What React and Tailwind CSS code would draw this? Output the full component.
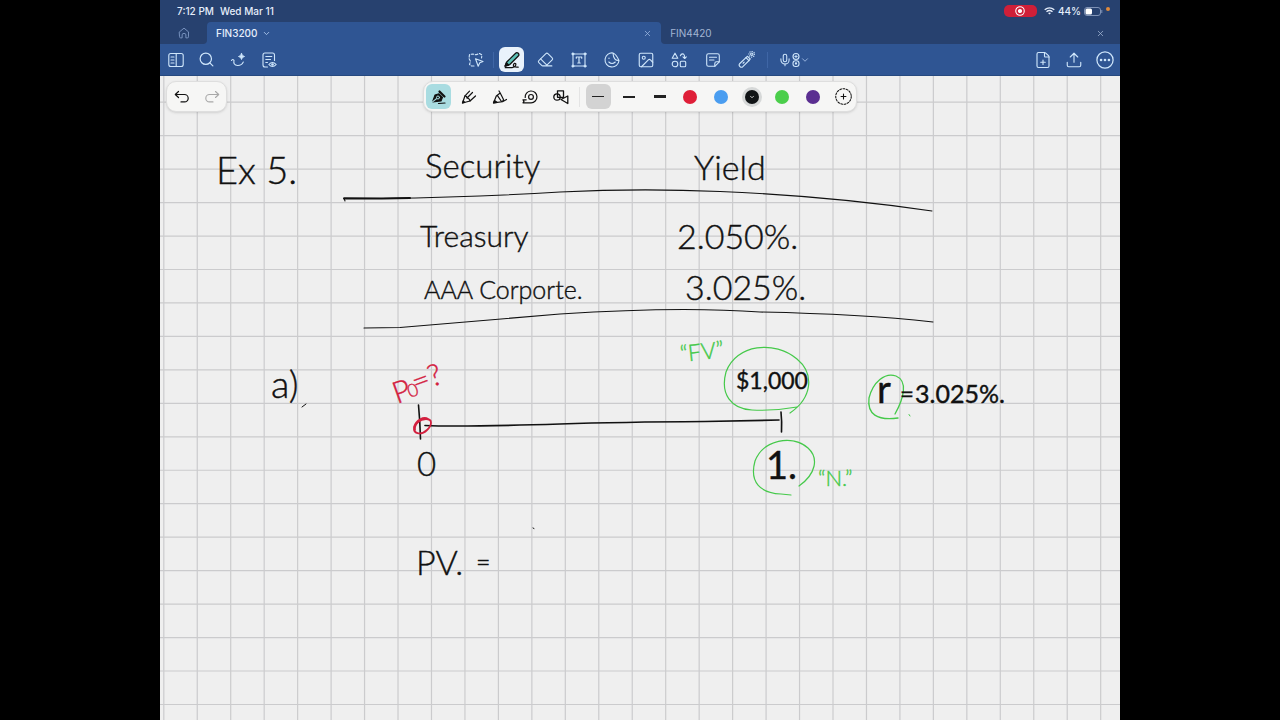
import { ChevronDown, Eraser, FilePlus, Image, Mic, Search, Upload, X } from 'lucide-react'

const INK = '#111111'
const RED = '#d3203f'
const GREEN = '#45c94a'

const GRID = 33.46
const columns = Array.from({ length: 60 }, (_, i) => 3.8 + i * GRID)
const rows = Array.from({ length: 50 }, (_, i) => 26.2 + i * GRID)

const notes = [
  { text: 'Ex 5.', x: 56, y: 108, size: 38 },
  { text: 'Security', x: 265, y: 102, size: 33 },
  { text: 'Yield', x: 534, y: 104, size: 34 },
  { text: 'Treasury', x: 260, y: 171, size: 30 },
  { text: 'AAA Corporte.', x: 264, y: 223, size: 25 },
  { text: '2.050%.', x: 517, y: 173, size: 34 },
  { text: '3.025%.', x: 525, y: 224, size: 34 },
  { text: 'a)', x: 111, y: 322, size: 38 },
  { text: '0', x: 257, y: 400, size: 33 },
  { text: '1.', x: 606, y: 403, size: 38, weight: 400 },
  { text: '$1,000', x: 576, y: 313, size: 23, weight: 400 },
  { text: 'r', x: 717, y: 327, size: 38, weight: 400 },
  { text: '=', x: 740, y: 326, size: 24, weight: 400 },
  { text: '3.025%.', x: 755, y: 327, size: 25, weight: 400 },
  { text: 'PV.', x: 256, y: 499, size: 34 },
  { text: '=', x: 316, y: 495, size: 25 },
  { text: '“FV”', x: 521, y: 286, size: 23, color: GREEN, angle: -6 },
  { text: '“N.”', x: 658, y: 410, size: 22, color: GREEN },
  { text: 'P', x: 237, y: 328, size: 30, color: RED, angle: -20 },
  { text: '0', x: 250, y: 322, size: 18, color: RED, angle: -20 },
  { text: '=?', x: 256, y: 317, size: 30, color: RED, angle: -20 },
]

const strokes = [
  { d: 'M185 125 L184 122 L222 122.5 Q320 121 400 116 Q480 112 560 115.5 Q670 120 772 135', width: 1.1 },
  { d: 'M184 122.5 L222 122.6 L250 122', width: 2 },
  { d: 'M204 252 L240 251.5 Q330 244 400 238 Q520 230 600 236 Q700 238 773 246', width: 1.1 },
  { d: 'M258.500 329 Q260 345 260.500 363', width: 1.6 },
  { d: 'M265 349.500 Q300 351 400 348 Q460 346 545 345.500 L619 344', width: 1.7 },
  { d: 'M621 336 Q622 345 621.500 356', width: 1.6 },
  { d: 'M373 452 L374 452.500', width: 1 },
  { d: 'M142 331 L146 328', width: 1 },
  { d: 'M268 343 C264 340 256 344 254 351 C253 359 262 359 267 354 C272 349 273 343 266 343 C260 343 254 348 255 354', width: 1.8, color: RED },
  { d: 'M630 337 C652 322 655 298 637 283 C615 264 576 268 566 296 C560 318 571 333 592 334 C610 335 626 333 637 331', width: 1.2, color: GREEN },
  { d: 'M639 410 C656 398 659 382 648 372 C632 358 603 364 595 385 C589 407 601 417 621 418 L631 419', width: 1.2, color: GREEN },
  { d: 'M735 338 C744 322 748 305 736 300 C725 296 713 306 709 322 C707 338 717 345 738 342', width: 1.3, color: GREEN },
  { d: 'M749 338.500 l1 1.500', width: 1, color: GREEN },
]

function Icon({ size = 16, width = 1.1, children }) {
  return (
    <svg width={size} height={size} viewBox="0 0 16 16" fill="none" stroke="currentColor" strokeWidth={width} strokeLinecap="round" strokeLinejoin="round" aria-hidden="true">
      {children}
    </svg>
  )
}

const HomeIcon = () => (
  <Icon size={12} width={1.2}>
    <path d="M2 6.500 L8 1.500 L14 6.500 V13 Q14 14.500 12.500 14.500 H10.500 V10.500 Q10.500 8.500 8 8.500 Q5.500 8.500 5.500 10.500 V14.500 H3.500 Q2 14.500 2 13 Z" />
  </Icon>
)

const PanelIcon = () => (
  <Icon>
    <rect x="0.8" y="1.500" width="14.400" height="13" rx="2" />
    <path d="M8.200 1.500 V14.500 M3 5 H6 M3 8 H6 M3 11 H6" />
  </Icon>
)

const AssistIcon = () => (
  <Icon>
    <path d="M1.500 8.500 Q2.500 6.500 4 8.300 Q3 13 7.500 13.500 Q11.500 13.700 13.300 10" />
    <path d="M11.500 1.500 Q11.800 4 14.500 4.500 Q11.800 5 11.500 7.500 Q11.200 5 8.500 4.500 Q11.200 4 11.500 1.500 Z" fill="currentColor" strokeWidth="0.900" />
  </Icon>
)

const OutlineIcon = () => (
  <Icon>
    <path d="M6.500 15 H4 Q2 15 2 13 V3 Q2 1 4 1 H11.500 Q13.500 1 13.500 3 V8.500" />
    <path d="M4.800 4.500 H10.800 M4.800 7.500 H9.500 M4.800 10.500 H6.500" />
    <path d="M7.800 12.500 Q11.500 8.500 15.200 12.500 Q11.500 16.500 7.800 12.500 Z" />
    <circle cx="11.500" cy="12.500" r="0.800" fill="currentColor" />
  </Icon>
)

const LassoIcon = () => (
  <Icon>
    <path d="M6 14 H3.500 L1.500 12.500 L2.500 9.500 L1 6.500 L1.500 2.500 L5 2 L8 2.800 L11.500 1.500 L14 3 L13.500 6" strokeDasharray="2.600 1.700" />
    <path d="M7.500 6.800 L15 9.500 L11.800 10.800 L10.200 14.200 Z" />
  </Icon>
)

const PenIcon = () => (
  <Icon size={18}>
    <path d="M1.800 13.500 L3.300 9.800 L11.200 2 Q12.300 0.900 13.600 2 Q14.700 3.300 13.600 4.500 L5.800 12.200 Z" fill="#5cc2b8" stroke={INK} />
    <path d="M1.800 13.500 L3 10.500 L5 12.500 Z" fill={INK} stroke={INK} />
    <path d="M2 14.800 H8 Q12 13.800 11.300 11.300 Q10.300 10.300 9.300 12.200 Q8.800 14.700 13.500 14.300" stroke={INK} />
  </Icon>
)

const TextIcon = () => (
  <Icon>
    <path d="M3 2 H13 M3 14 H13 M2 3 V13 M14 3 V13" />
    <path d="M5.300 6.200 V5 H10.700 V6.200 M8 5 V11 M6.800 11 H9.200" strokeWidth="1.200" />
    <g fill="currentColor" strokeWidth="0.500">
      <circle cx="1.900" cy="1.900" r="1.200" />
      <circle cx="14.100" cy="1.900" r="1.200" />
      <circle cx="1.900" cy="14.100" r="1.200" />
      <circle cx="14.100" cy="14.100" r="1.200" />
    </g>
  </Icon>
)

const StickerIcon = () => (
  <Icon>
    <path d="M9 1 A7 7 0 1 0 15 8.500 Q9.500 9 9 1 Q12 2 15 8.500" />
    <path d="M5 6 V6.500 M4.800 10 Q8 13 11.300 10" />
  </Icon>
)

const ShapesIcon = () => (
  <Icon>
    <path d="M4 1.200 L6.800 6.300 H1.200 Z" />
    <path d="M9.300 3.800 Q10 1.500 12.300 1.900 Q13.800 2.500 13.700 6 M12 4.800 L13.700 6.500 L15.300 4.800" />
    <circle cx="4" cy="12" r="2.800" />
    <rect x="9.300" y="9.300" width="5.400" height="5.400" rx="1" />
  </Icon>
)

const NoteIcon = () => (
  <Icon>
    <path d="M9.800 14.300 H3.500 Q1.700 14.300 1.700 12.500 V3.500 Q1.700 1.700 3.500 1.700 H12.500 Q14.300 1.700 14.300 3.500 V9.800 Z" />
    <path d="M14.300 9.800 H11.500 Q9.800 9.800 9.800 11.500 V14.300 M4.500 5.200 H11.500 M4.500 8 H9" />
  </Icon>
)

const LaserIcon = () => (
  <Icon size={17}>
    <path d="M1.500 12 L7.500 6.200 L10.300 9 L4.300 15 Q3 15.700 1.800 14.600 Q0.500 13.300 1.500 12 Z" />
    <path d="M7.500 6.200 L9 5 L11.500 7.500 L10.300 9 M4.800 11.500 L5.800 10.500" />
    <circle cx="13" cy="3" r="1.100" />
    <circle cx="13" cy="3" r="2.700" strokeDasharray="0.200 1.900" />
  </Icon>
)

// two stacked badges beside the microphone
const BadgesIcon = () => (
  <svg width="8" height="16" viewBox="0 0 8 16" fill="none" stroke="currentColor" strokeWidth="1.100" strokeLinecap="round" strokeLinejoin="round" aria-hidden="true">
    <circle cx="4" cy="4.500" r="3" />
    <path d="M2.800 4.500 H5.200 M4 3.300 V5.700" strokeWidth="0.900" />
    <rect x="1" y="8.800" width="6" height="5.700" rx="2.500" />
    <circle cx="4" cy="11.500" r="0.600" fill="currentColor" />
  </svg>
)

const MoreIcon = () => (
  <Icon size={18}>
    <circle cx="8" cy="8" r="7.200" />
    <g fill="currentColor" stroke="none">
      <circle cx="4.500" cy="8" r="1.150" />
      <circle cx="8" cy="8" r="1.150" />
      <circle cx="11.500" cy="8" r="1.150" />
    </g>
  </Icon>
)

const FountainIcon = () => (
  <Icon>
    <path d="M1.500 13 L4 6 L8 4.800 L11.500 8.300 L10 12 Z" fill={INK} />
    <path d="M8.500 2.500 L13.500 7.500" strokeWidth="2.200" />
    <path d="M1.200 13.200 L6.300 9" stroke="#a9dce1" />
    <circle cx="7" cy="8.500" r="1.500" fill={INK} stroke="#a9dce1" strokeWidth="1" />
    <path d="M7.500 14.500 L14 14" strokeWidth="1.200" />
  </Icon>
)

const BallpointIcon = () => (
  <Icon width={1.2}>
    <path d="M8.500 2.200 L4 6.800 L1.500 14 L9 12 L14.500 7" />
    <path d="M4 6.800 Q6 7 6 9 Q8.500 9.300 9 12 M11.500 3.500 L6 9" />
    <path d="M1.500 14 L2.300 11.800 L3.800 13.400 Z" fill="currentColor" />
  </Icon>
)

const BrushIcon = () => (
  <Icon width={1.2}>
    <path d="M7 2 L8.200 4 L4.300 7 L1.500 14 L10.500 12.700 L14.500 10.500 M8.200 4 L11.500 10.500 L10.500 12.700 M5.300 6.300 L9.500 12.500" />
    <path d="M1.500 14 L2.500 11.500 L5 13.300 Z" fill="currentColor" />
  </Icon>
)

const TapeIcon = () => (
  <Icon width={1.2}>
    <path d="M3.200 8.500 A5.900 5.900 0 1 1 9 13.800 H1 L2 12.300 L1 10.800 H4.200" />
    <circle cx="9" cy="7.900" r="2.400" />
  </Icon>
)

const ShapePenIcon = () => (
  <Icon width={1.3}>
    <rect x="4.500" y="1.800" width="6" height="6.500" />
    <circle cx="4" cy="8" r="3.200" />
    <path d="M8 10.500 L14.800 7 V14.500 Z" />
  </Icon>
)

const UndoIcon = () => (
  <Icon width={1.2}>
    <path d="M4.500 2.500 L1.300 5.500 L4.500 8.500 M1.500 5.500 H10.500 A3.700 3.700 0 0 1 10.500 12.900 H7" />
  </Icon>
)

const RedoIcon = () => (
  <Icon width={1.1}>
    <path d="M11.500 2.500 L14.700 5.500 L11.500 8.500 M14.500 5.500 H5.500 A3.700 3.700 0 0 0 5.500 12.900 H9" />
  </Icon>
)

const drawTools = [
  { label: 'Eraser', icon: <Eraser size={17} strokeWidth={1.5} /> },
  { label: 'Text', icon: <TextIcon /> },
  { label: 'Stickers', icon: <StickerIcon /> },
  { label: 'Image', icon: <Image size={18} strokeWidth={1.5} /> },
  { label: 'Elements', icon: <ShapesIcon /> },
  { label: 'Note', icon: <NoteIcon /> },
  { label: 'Laser pointer', icon: <LaserIcon /> },
]

const pens = [
  { label: 'Ball pen', icon: <BallpointIcon /> },
  { label: 'Brush pen', icon: <BrushIcon /> },
  { label: 'Tape', icon: <TapeIcon /> },
  { label: 'Shape pen', icon: <ShapePenIcon /> },
]

const widths = [
  { label: 'Thin', bar: 'h-px w-3', box: 'bg-[#d3d3d3]' },
  { label: 'Medium', bar: 'h-[2px] w-3', box: '' },
  { label: 'Thick', bar: 'h-[3px] w-3', box: '' },
]

const colors = [
  { label: 'Red', fill: 'bg-[#df1f38]' },
  { label: 'Blue', fill: 'bg-[#4a9df0]' },
  { label: 'Black', fill: 'bg-[#111416]', active: true },
  { label: 'Green', fill: 'bg-[#4bce4b]' },
  { label: 'Purple', fill: 'bg-[#5b2f91]' },
]

function ToolButton({ label, className = '', children }) {
  return (
    <button type="button" aria-label={label} className={`flex h-[25px] w-[25px] shrink-0 items-center justify-center rounded-md ${className}`}>
      {children}
    </button>
  )
}

function StatusBar() {
  return (
    <div className="flex h-[22px] items-center justify-between bg-[#27416f] pl-[17px] pr-[10px] text-[10px] font-medium text-[#e6eefb]">
      <div className="flex gap-[6px]">
        <span>7:12 PM</span>
        <span>Wed Mar 11</span>
      </div>
      <div className="flex items-center gap-[3px]">
        <span className="mr-1 flex h-3 w-[33px] items-center justify-center rounded-[5px] bg-[#cf1f38] text-white">
          <Icon size={10} width={1.7}>
            <circle cx="8" cy="8" r="6.800" />
            <circle cx="8" cy="8" r="2.500" fill="currentColor" />
          </Icon>
        </span>
        <svg width="11" height="8" viewBox="0 0 11 8" fill="none" stroke="currentColor" strokeWidth="1.400" aria-hidden="true">
          <path d="M0.700 2.700 Q5.500 -1 10.300 2.700 M2.500 4.700 Q5.500 2.300 8.500 4.700" />
          <path d="M4 6 Q5.500 5 7 6 L5.500 7.600 Z" fill="currentColor" stroke="none" />
        </svg>
        <span>44%</span>
        <svg width="19" height="9" viewBox="0 0 19 9" aria-hidden="true">
          <rect x="0.500" y="0.500" width="16" height="8" rx="2.500" fill="none" stroke="#7f92b5" />
          <rect x="1.500" y="1.500" width="6.500" height="6" rx="1.500" fill="#ffffff" />
          <path d="M17.800 3 V6" stroke="#7f92b5" />
        </svg>
        <span className="mb-1 h-1 w-1 rounded-full bg-[#e08a3c]" />
      </div>
    </div>
  )
}

function Tabs() {
  return (
    <nav className="flex h-[22px] bg-[#2f5593] text-[10px]">
      <button type="button" aria-label="Home" className="flex w-[47px] items-center justify-center rounded-br bg-[#27416f] text-[#7f9ac6]">
        <HomeIcon />
      </button>
      <div className="grid flex-1 grid-cols-[99fr_100fr]">
        <div className="bg-[#27416f]">
          <div className="flex h-full items-center rounded-t bg-[#2f5593] px-[9px]">
            <button type="button" className="flex items-center gap-1 font-medium text-[#e6eefb]">
              FIN3200
              <ChevronDown size={9} strokeWidth={2.5} className="text-[#a9c3ea]" />
            </button>
            <button type="button" aria-label="Close FIN3200" className="ml-auto text-[#9db8e2]">
              <X size={9} strokeWidth={2} />
            </button>
          </div>
        </div>
        <div className="flex items-center rounded-bl bg-[#27416f] pl-[9px] pr-[15px] text-[#a3b5d3]">
          <button type="button">FIN4420</button>
          <button type="button" aria-label="Close FIN4420" className="ml-auto">
            <X size={9} strokeWidth={2} />
          </button>
        </div>
      </div>
    </nav>
  )
}

function Toolbar() {
  return (
    <div className="flex h-8 items-center justify-between border-b border-[#26497f] bg-[#2f5593] px-[3px] text-[#cfe6fb]">
      <div className="flex flex-1 gap-[6px]">
        <ToolButton label="Sidebar"><PanelIcon /></ToolButton>
        <ToolButton label="Search"><Search size={17} strokeWidth={1.7} /></ToolButton>
        <ToolButton label="Assistant"><AssistIcon /></ToolButton>
        <ToolButton label="Outline"><OutlineIcon /></ToolButton>
      </div>
      <div className="flex items-center pr-[7px]">
        <ToolButton label="Lasso"><LassoIcon /></ToolButton>
        <span className="mx-[5px] h-4 w-px bg-[#3f66a6]" />
        <div className="flex w-[260px] justify-between">
          <ToolButton label="Pen" className="bg-[#e9f2fb]"><PenIcon /></ToolButton>
          {drawTools.map((tool) => (
            <ToolButton key={tool.label} label={tool.label}>{tool.icon}</ToolButton>
          ))}
        </div>
        <span className="mx-2 h-4 w-px bg-[#3f66a6]" />
        <button type="button" aria-label="Record audio" className="flex items-center pl-[2px]">
          <Mic size={14} strokeWidth={1.8} />
          <BadgesIcon />
          <ChevronDown size={10} strokeWidth={2} className="text-[#a9c3ea]" />
        </button>
      </div>
      <div className="flex flex-1 justify-end gap-[6px]">
        <ToolButton label="Add page"><FilePlus size={18} strokeWidth={1.5} /></ToolButton>
        <ToolButton label="Share"><Upload size={18} strokeWidth={1.5} /></ToolButton>
        <ToolButton label="More"><MoreIcon /></ToolButton>
      </div>
    </div>
  )
}

function FloatingBars() {
  return (
    <div className="absolute inset-x-0 top-[5px] flex justify-center text-[#111111]">
      <div className="absolute left-[6px] top-0 flex h-[31px] w-[61px] items-center justify-center gap-[5px] rounded-[10px] border border-[#dedede] bg-[#f6f6f5] shadow-sm">
        <ToolButton label="Undo"><UndoIcon /></ToolButton>
        <ToolButton label="Redo" className="text-[#a8a8a8]"><RedoIcon /></ToolButton>
      </div>
      <div className="flex h-[31px] w-[434px] items-center justify-between rounded-[10px] border border-[#dedede] bg-[#f6f6f5] pl-[2px] shadow-sm">
        <ToolButton label="Fountain pen" className="bg-[#a9dce1]"><FountainIcon /></ToolButton>
        {pens.map((pen) => (
          <ToolButton key={pen.label} label={pen.label}>{pen.icon}</ToolButton>
        ))}
        <span className="h-5 w-px bg-[#e4e4e4]" />
        {widths.map((item) => (
          <ToolButton key={item.label} label={item.label} className={item.box}>
            <span className={`bg-[#222222] ${item.bar}`} />
          </ToolButton>
        ))}
        {colors.map((color) => (
          <ToolButton key={color.label} label={color.label}>
            <span className={`flex h-[14px] w-[14px] items-center justify-center rounded-full text-white ${color.fill} ${color.active ? 'ring-3 ring-[#d6d8d8]' : ''}`}>
              {color.active && <ChevronDown size={6} strokeWidth={3} />}
            </span>
          </ToolButton>
        ))}
        <ToolButton label="Add color">
          <Icon size={17} width={1}>
            <circle cx="8" cy="8" r="7.300" strokeDasharray="1.700 1.360" />
            <path d="M8 5.700 V10.300 M5.700 8 H10.300" />
          </Icon>
        </ToolButton>
      </div>
    </div>
  )
}

function Page() {
  return (
    <svg className="absolute inset-0 h-full w-full bg-[#efefef] font-[Lato,sans-serif]">
      <g stroke="#cbcbcd" strokeWidth="1.200">
        {columns.map((x) => <line key={x} x1={x} x2={x} y1="0" y2="100%" />)}
        {rows.map((y) => <line key={y} x1="0" x2="100%" y1={y} y2={y} />)}
      </g>
      <g fill="none" strokeLinecap="round" strokeLinejoin="round">
        {strokes.map((s) => (
          <path key={s.d} d={s.d} stroke={s.color || INK} strokeWidth={s.width} />
        ))}
      </g>
      {notes.map((n) => (
        <text
          key={`${n.text}-${n.x}`}
          x={n.x}
          y={n.y}
          fontSize={n.size}
          fontWeight={n.weight || 300}
          fill={n.color || INK}
          stroke={n.color || INK}
          strokeWidth="0.4"
          transform={n.angle ? `rotate(${n.angle} ${n.x} ${n.y})` : undefined}
        >
          {n.text}
        </text>
      ))}
    </svg>
  )
}

export default function App() {
  return (
    <div className="min-h-screen bg-black px-[12.5%]">
      <div className="flex min-h-screen flex-col font-[Inter,sans-serif]">
        <header>
          <StatusBar />
          <Tabs />
          <Toolbar />
        </header>
        <main className="relative flex-1 overflow-hidden">
          <Page />
          <FloatingBars />
        </main>
      </div>
    </div>
  )
}
